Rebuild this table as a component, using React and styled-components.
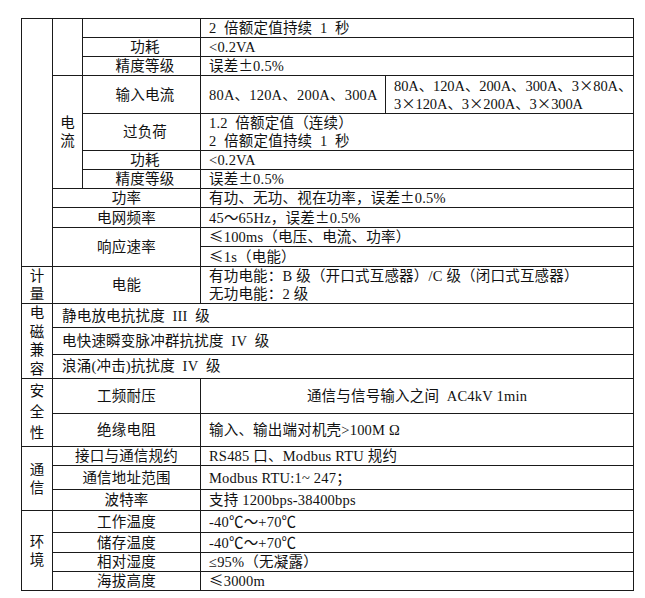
import React from 'react';
import styled, { createGlobalStyle } from 'styled-components';

const GlobalStyle = createGlobalStyle`
    html, body {
        margin: 0;
        background: #fff;
    }
    body {
        font-family: "Liberation Serif", "Noto Sans CJK SC", serif;
        color: #111;
    }
`;

const Page = styled.div`
    padding: 18px 0 0 21px;
`;

const SpecTable = styled.table`
    width: 612px;
    table-layout: fixed;
    border-collapse: collapse;
    border: 1px solid #222;
`;

const Row = styled.tr`
    height: ${props => props.$h}px;
`;

const Cell = styled.td`
    border: 1px solid #1a1a1a;
    padding: 0 0 0 ${props => (props.$pl !== undefined ? props.$pl : 8)}px;
    font-size: 14.5px;
    line-height: 18px;
    letter-spacing: ${props => (props.$tight ? '-0.1px' : '0.2px')};
    text-align: ${props => props.$align || 'left'};
    vertical-align: middle;
    white-space: nowrap;
`;

const Label = styled(Cell)`
    text-align: center;
    padding: 0 0 0 ${props => (props.$pl !== undefined ? props.$pl : 0)}px;
`;

const Group = styled(Cell)`
    text-align: center;
    padding: 0;
    line-height: ${props => props.$lh || 18}px;
`;

// full-width symbols set in the CJK face, as in the source document;
// the smaller line-height keeps the taller face from growing the line box
const Wide = styled.span`
    font-family: "Noto Sans CJK SC", sans-serif;
    line-height: 15px;
`;

const Stack = ({ text }) =>
    text.split('').map((ch, i) => (
        <React.Fragment key={i}>
            {i > 0 && <br />}
            {ch}
        </React.Fragment>
    ));

const Error05 = () => <>误差<Wide>±</Wide>0.5%</>;
const X = () => <Wide>×</Wide>;

export default function App() {
    return (
        <Page>
            <GlobalStyle />
            <SpecTable>
                <colgroup>
                    <col style={{ width: 31 }} />
                    <col style={{ width: 30 }} />
                    <col style={{ width: 118 }} />
                    <col style={{ width: 185 }} />
                    <col style={{ width: 248 }} />
                </colgroup>
                <tbody>
                    {/* 电压 (continued from previous page) */}
                    <Row $h={19}>
                        <Group rowSpan={11} />
                        <Group rowSpan={3} />
                        <Label $pl={7} />
                        <Cell colSpan={2}>2&nbsp; 倍额定值持续&nbsp; 1&nbsp; 秒</Cell>
                    </Row>
                    <Row $h={19}>
                        <Label $pl={7}>功耗</Label>
                        <Cell colSpan={2}>&lt;0.2VA</Cell>
                    </Row>
                    <Row $h={19}>
                        <Label $pl={7}>精度等级</Label>
                        <Cell colSpan={2}><Error05 /></Cell>
                    </Row>

                    {/* 电流 */}
                    <Row $h={38}>
                        <Group rowSpan={4}><Stack text="电流" /></Group>
                        <Label $pl={7}>输入电流</Label>
                        <Cell>80A、120A、200A、300A</Cell>
                        <Cell $tight>
                            80A、120A、200A、300A、3<X />80A、<br />
                            3<X />120A、3<X />200A、3<X />300A
                        </Cell>
                    </Row>
                    <Row $h={37}>
                        <Label $pl={7}>过负荷</Label>
                        <Cell colSpan={2}>
                            1.2&nbsp; 倍额定值（连续）<br />
                            2&nbsp; 倍额定值持续&nbsp; 1&nbsp; 秒
                        </Cell>
                    </Row>
                    <Row $h={19}>
                        <Label $pl={7}>功耗</Label>
                        <Cell colSpan={2}>&lt;0.2VA</Cell>
                    </Row>
                    <Row $h={19}>
                        <Label $pl={7}>精度等级</Label>
                        <Cell colSpan={2}><Error05 /></Cell>
                    </Row>

                    <Row $h={19}>
                        <Label colSpan={2}>功率</Label>
                        <Cell colSpan={2}>有功、无功、视在功率，<Error05 /></Cell>
                    </Row>
                    <Row $h={20}>
                        <Label colSpan={2}>电网频率</Label>
                        <Cell colSpan={2}>45～65Hz，<Error05 /></Cell>
                    </Row>
                    <Row $h={18}>
                        <Label colSpan={2} rowSpan={2}>响应速率</Label>
                        <Cell colSpan={2}><Wide>≤</Wide>100ms（电压、电流、功率）</Cell>
                    </Row>
                    <Row $h={20}>
                        <Cell colSpan={2}><Wide>≤</Wide>1s（电能）</Cell>
                    </Row>

                    {/* 计量 */}
                    <Row $h={37}>
                        <Group><Stack text="计量" /></Group>
                        <Label colSpan={2}>电能</Label>
                        <Cell colSpan={2}>
                            有功电能：B 级（开口式互感器）/C 级（闭口式互感器）<br />
                            无功电能：2 级
                        </Cell>
                    </Row>

                    {/* 电磁兼容 */}
                    <Row $h={24}>
                        <Group rowSpan={3} $lh={18.5}><Stack text="电磁兼容" /></Group>
                        <Cell colSpan={4} $pl={9}>静电放电抗扰度&nbsp; III&nbsp; 级</Cell>
                    </Row>
                    <Row $h={26}>
                        <Cell colSpan={4} $pl={9}>电快速瞬变脉冲群抗扰度&nbsp; IV&nbsp; 级</Cell>
                    </Row>
                    <Row $h={24}>
                        <Cell colSpan={4} $pl={9}>浪涌(冲击)抗扰度&nbsp; IV&nbsp; 级</Cell>
                    </Row>

                    {/* 安全性 */}
                    <Row $h={35}>
                        <Group rowSpan={2} $lh={21}><Stack text="安全性" /></Group>
                        <Label colSpan={2}>工频耐压</Label>
                        <Cell colSpan={2} $align="center" $pl={0}>通信与信号输入之间&nbsp; AC4kV 1min</Cell>
                    </Row>
                    <Row $h={33}>
                        <Label colSpan={2}>绝缘电阻</Label>
                        <Cell colSpan={2}>输入、输出端对机壳&gt;100M Ω</Cell>
                    </Row>

                    {/* 通信 */}
                    <Row $h={19}>
                        <Group rowSpan={3}><Stack text="通信" /></Group>
                        <Label colSpan={2}>接口与通信规约</Label>
                        <Cell colSpan={2}>RS485 口、Modbus RTU 规约</Cell>
                    </Row>
                    <Row $h={24}>
                        <Label colSpan={2}>通信地址范围</Label>
                        <Cell colSpan={2}>Modbus RTU:1~ 247；</Cell>
                    </Row>
                    <Row $h={21}>
                        <Label colSpan={2}>波特率</Label>
                        <Cell colSpan={2}>支持 1200bps-38400bps</Cell>
                    </Row>

                    {/* 环境 */}
                    <Row $h={22}>
                        <Group rowSpan={4}><Stack text="环境" /></Group>
                        <Label colSpan={2}>工作温度</Label>
                        <Cell colSpan={2}>-40℃～+70℃</Cell>
                    </Row>
                    <Row $h={20}>
                        <Label colSpan={2}>储存温度</Label>
                        <Cell colSpan={2}>-40℃～+70℃</Cell>
                    </Row>
                    <Row $h={19}>
                        <Label colSpan={2}>相对湿度</Label>
                        <Cell colSpan={2}>≤95%（无凝露）</Cell>
                    </Row>
                    <Row $h={19}>
                        <Label colSpan={2}>海拔高度</Label>
                        <Cell colSpan={2}><Wide>≤</Wide>3000m</Cell>
                    </Row>
                </tbody>
            </SpecTable>
        </Page>
    );
}
